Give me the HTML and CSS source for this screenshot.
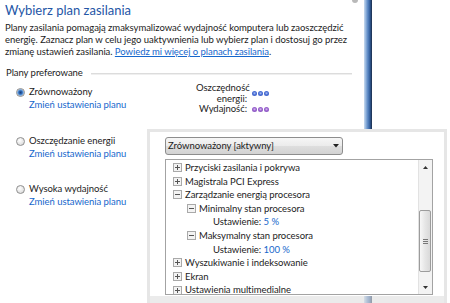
FILE: index.html
```html
<!DOCTYPE html>
<html lang="pl">
<head>
<meta charset="utf-8">
<title>Wybierz plan zasilania</title>
<link rel="stylesheet" href="styles.css">
</head>
<body>
<div class="page">
  <div class="main">
    <h1 class="title">Wybierz plan zasilania</h1>
    <p class="intro">Plany zasilania pomagają zmaksymalizować wydajność komputera lub zaoszczędzić<br>energię. Zaznacz plan w celu jego uaktywnienia lub wybierz plan i dostosuj go przez<br>zmianę ustawień zasilania. <a class="link" href="#">Powiedz mi więcej o planach zasilania</a>.</p>
    <div class="section-head"><span>Plany preferowane</span><span class="rule"></span></div>

    <div class="plan">
      <div class="plan-info">
        <div class="plan-name"><span class="radio radio-on"></span>Zrównoważony</div>
        <a class="plan-link" href="#">Zmień ustawienia planu</a>
      </div>
      <div class="metrics">
        <div class="metric-label">Oszczędność<br>energii:</div>
        <div class="dots dots-blue"><i></i><i></i><i></i></div>
        <div class="metric-label">Wydajność:</div>
        <div class="dots dots-purple"><i></i><i></i><i></i></div>
      </div>
    </div>

    <div class="plan">
      <div class="plan-info">
        <div class="plan-name"><span class="radio"></span>Oszczędzanie energii</div>
        <a class="plan-link" href="#">Zmień ustawienia planu</a>
      </div>
    </div>

    <div class="plan">
      <div class="plan-info">
        <div class="plan-name"><span class="radio"></span>Wysoka wydajność</div>
        <a class="plan-link" href="#">Zmień ustawienia planu</a>
      </div>
    </div>
  </div>

  <div class="side-bar"></div>
  <span class="knob"></span>

  <div class="callout">
    <div class="callout-body">
      <div class="dropdown">
        <span>Zrównoważony [aktywny]</span>
        <svg class="dd-arrow" width="6" height="4" viewBox="0 0 6 4"><path d="M0 0h6L3 3.5z" fill="#222"/></svg>
      </div>
      <div class="listbox">
        <div class="tree">
          <div class="row l0"><svg class="exp" width="9" height="9" viewBox="0 0 9 9"><rect x="0.5" y="0.5" width="8" height="8" fill="#f3f3f3" stroke="#a9a9a9"/><rect x="2" y="4" width="5" height="1" fill="#555"/><rect x="4" y="2" width="1" height="5" fill="#555"/></svg><span>Przyciski zasilania i pokrywa</span></div>
          <div class="row l0"><svg class="exp" width="9" height="9" viewBox="0 0 9 9"><rect x="0.5" y="0.5" width="8" height="8" fill="#f3f3f3" stroke="#a9a9a9"/><rect x="2" y="4" width="5" height="1" fill="#555"/><rect x="4" y="2" width="1" height="5" fill="#555"/></svg><span>Magistrala PCI Express</span></div>
          <div class="row l0"><svg class="exp" width="9" height="9" viewBox="0 0 9 9"><rect x="0.5" y="0.5" width="8" height="8" fill="#f3f3f3" stroke="#a9a9a9"/><rect x="2" y="4" width="5" height="1" fill="#555"/></svg><span>Zarządzanie energią procesora</span></div>
          <div class="row l1"><svg class="exp" width="9" height="9" viewBox="0 0 9 9"><rect x="0.5" y="0.5" width="8" height="8" fill="#f3f3f3" stroke="#a9a9a9"/><rect x="2" y="4" width="5" height="1" fill="#555"/></svg><span>Minimalny stan procesora</span></div>
          <div class="row l2"><span>Ustawienie: <span class="val">5 %</span></span></div>
          <div class="row l1"><svg class="exp" width="9" height="9" viewBox="0 0 9 9"><rect x="0.5" y="0.5" width="8" height="8" fill="#f3f3f3" stroke="#a9a9a9"/><rect x="2" y="4" width="5" height="1" fill="#555"/></svg><span>Maksymalny stan procesora</span></div>
          <div class="row l2"><span>Ustawienie: <span class="val">100 %</span></span></div>
          <div class="row l0"><svg class="exp" width="9" height="9" viewBox="0 0 9 9"><rect x="0.5" y="0.5" width="8" height="8" fill="#f3f3f3" stroke="#a9a9a9"/><rect x="2" y="4" width="5" height="1" fill="#555"/><rect x="4" y="2" width="1" height="5" fill="#555"/></svg><span>Wyszukiwanie i indeksowanie</span></div>
          <div class="row l0"><svg class="exp" width="9" height="9" viewBox="0 0 9 9"><rect x="0.5" y="0.5" width="8" height="8" fill="#f3f3f3" stroke="#a9a9a9"/><rect x="2" y="4" width="5" height="1" fill="#555"/><rect x="4" y="2" width="1" height="5" fill="#555"/></svg><span>Ekran</span></div>
          <div class="row l0"><svg class="exp" width="9" height="9" viewBox="0 0 9 9"><rect x="0.5" y="0.5" width="8" height="8" fill="#f3f3f3" stroke="#a9a9a9"/><rect x="2" y="4" width="5" height="1" fill="#555"/><rect x="4" y="2" width="1" height="5" fill="#555"/></svg><span>Ustawienia multimedialne</span></div>
        </div>
        <div class="vscroll">
          <div class="sb-btn"><svg width="5" height="3" viewBox="0 0 5 3"><path d="M0 3h5L2.5 0z" fill="#333"/></svg></div>
          <div class="sb-track">
            <div class="sb-thumb"><span class="grip"></span></div>
          </div>
          <div class="sb-btn"><svg width="5" height="3" viewBox="0 0 5 3"><path d="M0 0h5L2.5 3z" fill="#333"/></svg></div>
        </div>
      </div>
    </div>
    <div class="callout-foot"></div>
  </div>
</div>
</body>
</html>
```
FILE: styles.css
```css
* { box-sizing: border-box; }
html, body { margin: 0; padding: 0; background: #fff; }
body {
  font-family: Lato, "Open Sans", sans-serif;
  font-size: 9.5px;
  letter-spacing: -0.05px;
  color: #1c1c1c;
}
.page {
  position: relative;
  width: 450px;
  height: 303px;
  overflow: hidden;
  display: flex;
}
.main {
  width: 352px;
  flex: 0 0 352px;
  padding-left: 5px;
}
.title {
  margin: 2px 0 0;
  font-size: 13px;
  line-height: 16px;
  font-weight: normal;
  letter-spacing: 0;
  color: #2456a6;
}
.intro {
  margin: 4px 0 0;
  line-height: 12px;
  white-space: nowrap;
}
.link, .plan-link {
  color: #1667cc;
  text-decoration: none;
}
.intro .link { text-decoration: underline; }
.section-head {
  margin-top: 9px;
  padding-left: 1px;
  line-height: 12px;
  display: flex;
  align-items: center;
  gap: 8px;
}
.rule {
  flex: 1;
  height: 1px;
  background: #dcdcdc;
  box-shadow: 0 1px 0 #efefef;
}
.plan {
  height: 26px;
  margin-top: 6px;
  margin-bottom: 22.5px;
  padding-left: 11px;
  display: grid;
  grid-template-columns: 180px auto;
  align-items: start;
  line-height: 13px;
}
.plan + .plan { margin-top: 0; }
.plan-info { display: flex; flex-direction: column; }
.plan-name { display: flex; align-items: flex-start; gap: 4px; }
.plan-link { padding-left: 13px; }
.radio {
  width: 9px;
  height: 9px;
  margin-top: 3px;
  border-radius: 50%;
  border: 1px solid #8f8f8f;
  background: radial-gradient(circle at 40% 35%, #ffffff, #e4e4e4 60%, #cfcfcf);
  flex: 0 0 9px;
}
.radio-on {
  background: radial-gradient(circle, #1b3e7a 0, #2a64b0 1.5px, #7fb0e6 3px, #e6e6e6 3.6px, #d2d2d2);
}
.metrics {
  margin-top: -2px;
  display: grid;
  grid-template-columns: 51px 20px;
  column-gap: 5px;
  align-items: center;
  line-height: 10.5px;
}
.metric-label { text-align: right; color: #1c1c1c; }
.dots { display: flex; gap: 1px; }
.dots i {
  width: 5px;
  height: 5px;
  border-radius: 50%;
  display: block;
}
.dots-blue i { background: radial-gradient(circle at 50% 45%, #a9c0f2 0, #4b6fd6 1.6px, #2f4fb2); }
.dots-purple i { background: radial-gradient(circle at 50% 45%, #d6bdf0 0, #9a63cf 1.6px, #7442ad); }

.side-bar {
  width: 8px;
  margin-left: 12px;
  height: 303px;
  background: linear-gradient(to right, #c9dbef 0, #98b8df 20%, #5f8bc5 45%, #3f6dac 65%, #2a4d80 82%, #1a2c48 100%);
}
.knob {
  position: absolute;
  left: 352px;
  top: -3px;
  width: 6px;
  height: 6px;
  border-radius: 50%;
  background: #b9b9b9;
}

.callout {
  position: absolute;
  left: 147px;
  top: 129px;
  width: 300px;
  bottom: 0;
  border: 3px solid #e6e6e6;
  border-bottom: 0;
  display: flex;
  flex-direction: column;
}
.callout-body {
  background: #fff;
  padding: 5px 10px 1px 15px;
}
.callout-foot {
  flex: 1;
  background: rgba(222, 222, 222, 0.62);
}
.dropdown {
  width: 178px;
  height: 18px;
  border: 1px solid #8d8d8d;
  border-radius: 3px;
  background: linear-gradient(#f6f6f6, #ebebeb 50%, #dedede 51%, #d2d2d2);
  display: flex;
  align-items: center;
  justify-content: space-between;
  padding: 0 3px 0 2px;
  line-height: 16px;
}
.dd-arrow { display: block; }
.listbox {
  margin-top: 4px;
  width: 268px;
  height: 136px;
  border: 1px solid #a3a3a3;
  display: flex;
  overflow: hidden;
}
.tree {
  flex: 1;
  overflow: hidden;
  padding-top: 1px;
}
.row {
  height: 13.6px;
  line-height: 13.6px;
  display: flex;
  align-items: center;
  gap: 3px;
  white-space: nowrap;
}
.l0 { padding-left: 7px; }
.l1 { padding-left: 21px; }
.l2 { padding-left: 47px; }
.exp { display: block; flex: 0 0 9px; }
.val { color: #1667cc; }
.vscroll {
  width: 14px;
  flex: 0 0 14px;
  border-left: 1px solid #e2e2e2;
  background: #f3f3f3;
  display: flex;
  flex-direction: column;
}
.sb-btn {
  height: 14px;
  display: flex;
  align-items: center;
  justify-content: center;
}
.sb-btn svg { display: block; }
.sb-track {
  flex: 1;
  padding-top: 36px;
}
.sb-thumb {
  height: 62px;
  margin: 0 1px 0 0;
  border: 1px solid #9c9c9c;
  border-radius: 2px;
  background: linear-gradient(to right, #f7f7f7, #e6e6e6 50%, #d9d9d9);
  display: flex;
  align-items: center;
  justify-content: center;
}
.grip {
  width: 5px;
  height: 5px;
  background: linear-gradient(#777 0 1px, transparent 1px 2px, #777 2px 3px, transparent 3px 4px, #777 4px 5px);
}
```
